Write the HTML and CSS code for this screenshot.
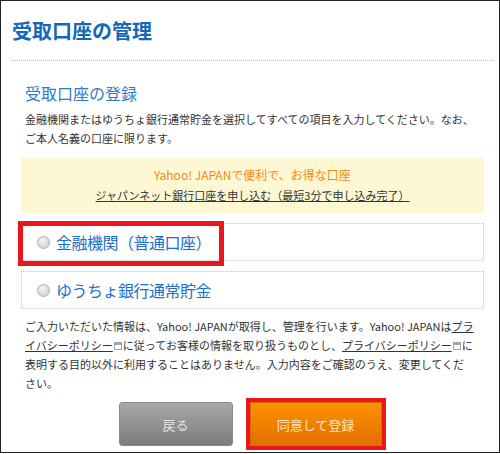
FILE: index.html
```html
<!DOCTYPE html>
<html lang="ja">
<head>
    <meta charset="UTF-8">
    <title>受取口座の管理</title>
    <link rel="stylesheet" href="styles.css">
</head>
<body>
    <div class="frame">
        <h1 class="page-title">受取口座の管理</h1>
        <div class="content">
            <h2 class="sub-title">受取口座の登録</h2>
            <p class="lead">金融機関またはゆうちょ銀行通常貯金を選択してすべての項目を入力してください。なお、ご本人名義の口座に限ります。</p>
            <div class="promo">
                <div class="promo-head">Yahoo! JAPANで便利で、お得な口座</div>
                <a class="promo-link" href="#">ジャパンネット銀行口座を申し込む（最短3分で申し込み完了）</a>
            </div>
            <div class="option">
                <label class="option-label marked">
                    <span class="radio"></span>金融機関（普通口座）
                </label>
            </div>
            <div class="option">
                <label class="option-label">
                    <span class="radio"></span>ゆうちょ銀行通常貯金
                </label>
            </div>
            <p class="notice">ご入力いただいた情報は、Yahoo! JAPANが取得し、管理を行います。Yahoo! JAPANは<a href="#">プライバシーポリシー</a><svg class="ext" width="8" height="8" viewBox="0 0 8 8"><rect x="0.5" y="0.5" width="7" height="7" fill="#fff" stroke="#9aa6b8"/><rect x="1" y="1" width="6" height="2" fill="#9aa6b8"/></svg>に従ってお客様の情報を取り扱うものとし、<a href="#">プライバシーポリシー</a><svg class="ext" width="8" height="8" viewBox="0 0 8 8"><rect x="0.5" y="0.5" width="7" height="7" fill="#fff" stroke="#9aa6b8"/><rect x="1" y="1" width="6" height="2" fill="#9aa6b8"/></svg>に表明する目的以外に利用することはありません。入力内容をご確認のうえ、変更してください。</p>
            <div class="actions">
                <button class="btn btn-back">戻る</button>
                <button class="btn btn-submit">同意して登録</button>
            </div>
        </div>
    </div>
</body>
</html>
```

FILE: styles.css
```css
body {
    margin: 0;
    background: #fff;
    font-family: "Noto Sans CJK JP", "Liberation Sans", sans-serif;
    color: #333;
}
.frame {
    width: 500px;
    height: 453px;
    box-sizing: border-box;
    border: 1px solid #222;
    padding: 0 5px 0 10px;
    overflow: hidden;
}
.page-title {
    margin: 0;
    padding: 16px 0 15px 1px;
    font-size: 20px;
    line-height: 28px;
    font-weight: bold;
    color: #1468b8;
    border-bottom: 1px dotted #b8b8b8;
}
.content {
    padding: 0 10px 0 10px;
}
.sub-title {
    margin: 21px 0 0 4px;
    font-size: 16px;
    line-height: 22px;
    font-weight: normal;
    color: #2f7bc9;
}
.lead {
    margin: 6px 0 0 4px;
    font-size: 11px;
    line-height: 19px;
}
.promo {
    margin-top: 10px;
    background: #fdf8d3;
    padding: 7px 0 8px;
    text-align: center;
    font-size: 11px;
    line-height: 20px;
}
.promo-head {
    color: #f28a10;
    font-size: 12px;
}
.promo-link {
    color: #333;
}
.option {
    margin-top: 10px;
    height: 38px;
    box-sizing: border-box;
    border: 1px dotted #c4c4c4;
    display: flex;
    align-items: center;
    padding-left: 15px;
}
.option-label {
    display: flex;
    align-items: center;
    gap: 6px;
    font-size: 16px;
    letter-spacing: -0.5px;
    color: #1a6fc8;
    position: relative;
}
.option-label.marked::after {
    content: "";
    position: absolute;
    left: -19px;
    right: -13px;
    top: -9px;
    bottom: -12px;
    border: 5px solid #e8161e;
}
.radio {
    width: 11px;
    height: 11px;
    border-radius: 50%;
    border: 1px solid #b0b0b0;
    background: radial-gradient(circle at 40% 35%, #f4f4f4, #c8c8c8);
}
.notice {
    margin: 8px 10px 0 4px;
    font-size: 11px;
    line-height: 19px;
}
.notice a {
    color: #333;
}
.ext {
    display: inline-block;
    margin: 0 1px;
    vertical-align: 0;
}
.actions {
    display: flex;
    justify-content: center;
    gap: 17px;
    margin-top: 9px;
    padding-right: 5px;
}
.btn {
    width: 114px;
    height: 44px;
    border-radius: 3px;
    font-family: "Noto Sans CJK JP", sans-serif;
    font-size: 13px;
}
.btn-back {
    border: 1px solid #8a8a8a;
    background: linear-gradient(#a8a8a8, #7c7c7c);
    color: #e4e4e4;
}
.btn-submit {
    width: 132px;
    border: 1px solid #d86a00;
    border-radius: 0;
    background: linear-gradient(#fb9200, #e27000);
    color: #fde3c4;
    outline: 4px solid #e8161e;
}
```
